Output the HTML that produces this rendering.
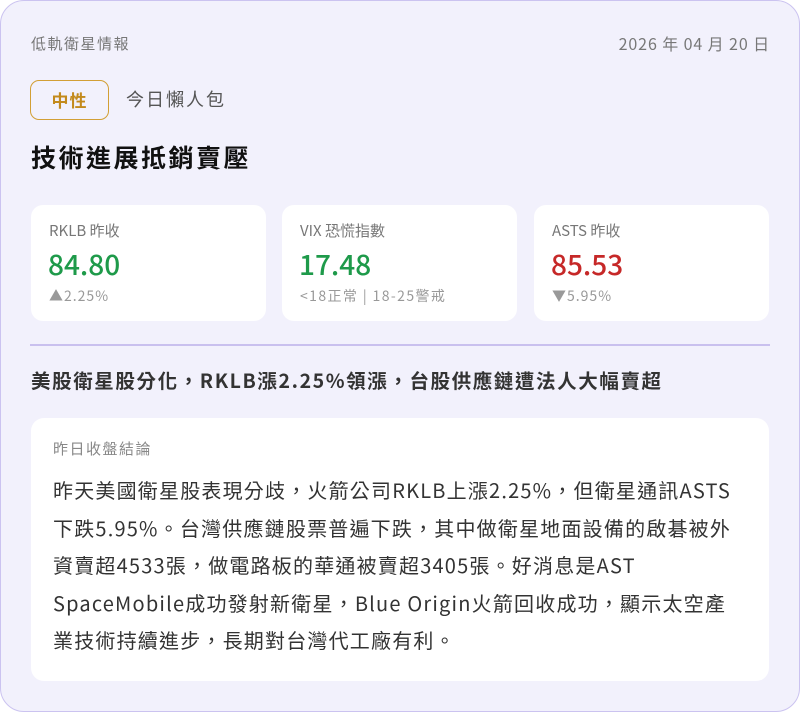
<!DOCTYPE html>
<html><head><meta charset="utf-8"><style>
*{margin:0;padding:0;box-sizing:border-box}
body{width:800px;height:712px;background:#fff;font-family:"Noto Sans CJK TC","Liberation Sans",sans-serif;position:relative;overflow:hidden}
.card{position:absolute;left:0;top:0;width:800px;height:712px;background:#f2f1fc;border:1.5px solid #cbc3f0;border-radius:24px}
.abs{position:absolute;white-space:nowrap;line-height:1.2}
.sc{position:absolute;top:205px;width:235px;height:116px;background:#fff;border-radius:12px}
.sc .l{position:absolute;left:18px;top:16px;font-size:15px;color:#777;line-height:20px}
.sc .v{position:absolute;left:17px;top:42px;font-size:28px;line-height:34px;font-weight:500}
.sc .s{position:absolute;left:18px;top:81px;font-size:14px;color:#999;line-height:20px;letter-spacing:1px}
</style></head><body>
<div class="card"></div>
<div class="abs" style="left:31px;top:35px;font-size:15px;color:#777;letter-spacing:1.5px">低軌衛星情報</div>
<div class="abs" style="right:30px;top:34px;font-size:16px;color:#777;letter-spacing:0.9px">2026 年 04 月 20 日</div>
<div class="abs" style="left:30px;top:80px;width:79px;height:40px;border:1.5px solid #d29f35;border-radius:9px;color:#c38a1c;font-weight:bold;font-size:17px;text-align:center;line-height:37px;letter-spacing:1px">中性</div>
<div class="abs" style="left:126px;top:89px;font-size:18px;color:#555;letter-spacing:2px">今日懶人包</div>
<div class="abs" style="left:31px;top:142px;font-size:25px;font-weight:bold;color:#111;letter-spacing:2.5px">技術進展抵銷賣壓</div>
<div class="sc" style="left:31px"><div class="l">RKLB 昨收</div><div class="v" style="color:#1e9a4a">84.80</div><div class="s">▲2.25%</div></div>
<div class="sc" style="left:282px"><div class="l">VIX 恐慌指數</div><div class="v" style="color:#1e9a4a">17.48</div><div class="s" style="letter-spacing:1.4px">&lt;18正常 | 18-25警戒</div></div>
<div class="sc" style="left:534px"><div class="l">ASTS 昨收</div><div class="v" style="color:#c62828">85.53</div><div class="s">▼5.95%</div></div>
<div class="abs" style="left:30px;top:344px;width:740px;height:1.5px;background:#c9c0ee"></div>
<div class="abs" style="left:31px;top:368px;font-size:19.5px;font-weight:bold;color:#333;letter-spacing:1.6px">美股衛星股分化，RKLB漲2.25%領漲，台股供應鏈遭法人大幅賣超</div>
<div class="abs" style="left:31px;top:418px;width:738px;height:263px;background:#fff;border-radius:13px">
<div style="position:absolute;left:22px;top:21px;font-size:15px;color:#888;line-height:20px;letter-spacing:1.5px">昨日收盤結論</div>
<div style="position:absolute;left:22px;top:53px;font-size:20px;line-height:37.6px;color:#333;white-space:nowrap;letter-spacing:1.2px">昨天美國衛星股表現分歧，火箭公司RKLB上漲2.25%，但衛星通訊ASTS<br>下跌5.95%。台灣供應鏈股票普遍下跌，其中做衛星地面設備的啟碁被外<br>資賣超4533張，做電路板的華通被賣超3405張。好消息是AST<br>SpaceMobile成功發射新衛星，Blue Origin火箭回收成功，顯示太空產<br>業技術持續進步，長期對台灣代工廠有利。</div>
</div>
</body></html>
